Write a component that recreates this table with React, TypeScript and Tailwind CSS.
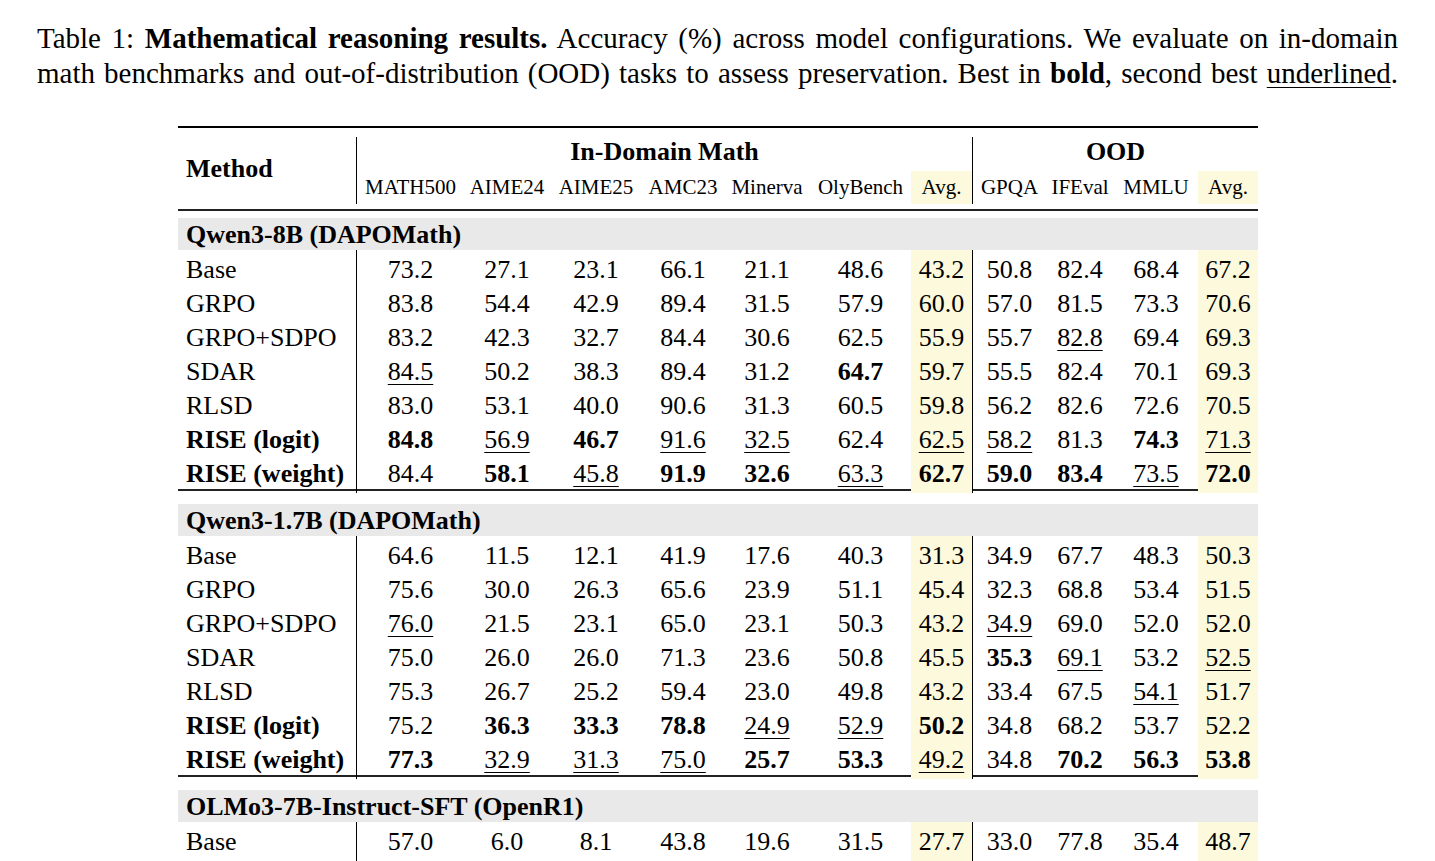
import React from "react";

type Row = { method: string; bold?: boolean; vals: string[] };
type Section = { title: string; rows: Row[] };

// "*" = best (bold), "_" = second best (underlined)
const sections: Section[] = [
  {
    title: "Qwen3-8B (DAPOMath)",
    rows: [
      { method: "Base", vals: ["73.2", "27.1", "23.1", "66.1", "21.1", "48.6", "43.2", "50.8", "82.4", "68.4", "67.2"] },
      { method: "GRPO", vals: ["83.8", "54.4", "42.9", "89.4", "31.5", "57.9", "60.0", "57.0", "81.5", "73.3", "70.6"] },
      { method: "GRPO+SDPO", vals: ["83.2", "42.3", "32.7", "84.4", "30.6", "62.5", "55.9", "55.7", "_82.8", "69.4", "69.3"] },
      { method: "SDAR", vals: ["_84.5", "50.2", "38.3", "89.4", "31.2", "*64.7", "59.7", "55.5", "82.4", "70.1", "69.3"] },
      { method: "RLSD", vals: ["83.0", "53.1", "40.0", "90.6", "31.3", "60.5", "59.8", "56.2", "82.6", "72.6", "70.5"] },
      { method: "RISE (logit)", bold: true, vals: ["*84.8", "_56.9", "*46.7", "_91.6", "_32.5", "62.4", "_62.5", "_58.2", "81.3", "*74.3", "_71.3"] },
      { method: "RISE (weight)", bold: true, vals: ["84.4", "*58.1", "_45.8", "*91.9", "*32.6", "_63.3", "*62.7", "*59.0", "*83.4", "_73.5", "*72.0"] },
    ],
  },
  {
    title: "Qwen3-1.7B (DAPOMath)",
    rows: [
      { method: "Base", vals: ["64.6", "11.5", "12.1", "41.9", "17.6", "40.3", "31.3", "34.9", "67.7", "48.3", "50.3"] },
      { method: "GRPO", vals: ["75.6", "30.0", "26.3", "65.6", "23.9", "51.1", "45.4", "32.3", "68.8", "53.4", "51.5"] },
      { method: "GRPO+SDPO", vals: ["_76.0", "21.5", "23.1", "65.0", "23.1", "50.3", "43.2", "_34.9", "69.0", "52.0", "52.0"] },
      { method: "SDAR", vals: ["75.0", "26.0", "26.0", "71.3", "23.6", "50.8", "45.5", "*35.3", "_69.1", "53.2", "_52.5"] },
      { method: "RLSD", vals: ["75.3", "26.7", "25.2", "59.4", "23.0", "49.8", "43.2", "33.4", "67.5", "_54.1", "51.7"] },
      { method: "RISE (logit)", bold: true, vals: ["75.2", "*36.3", "*33.3", "*78.8", "_24.9", "_52.9", "*50.2", "34.8", "68.2", "53.7", "52.2"] },
      { method: "RISE (weight)", bold: true, vals: ["*77.3", "_32.9", "_31.3", "_75.0", "*25.7", "*53.3", "_49.2", "34.8", "*70.2", "*56.3", "*53.8"] },
    ],
  },
  {
    title: "OLMo3-7B-Instruct-SFT (OpenR1)",
    rows: [
      { method: "Base", vals: ["57.0", "6.0", "8.1", "43.8", "19.6", "31.5", "27.7", "33.0", "77.8", "35.4", "48.7"] },
    ],
  },
];

const cols = ["MATH500", "AIME24", "AIME25", "AMC23", "Minerva", "OlyBench", "Avg.", "GPQA", "IFEval", "MMLU", "Avg."];
const grid = "grid grid-cols-[178px_108px_86px_92px_82px_86px_101px_61px_74px_68px_84px_60px]";
const subGrid = "grid grid-cols-[108px_86px_92px_82px_86px_101px_61px_74px_68px_84px_60px]";

// i = index among the 11 metric columns
function cellClass(i: number) {
  const avg = i === 6 || i === 10;
  const rule = i === 0 || i === 7;
  return `flex items-center justify-center h-full ${avg ? "bg-[#fdf9dc]" : ""} ${rule ? "border-l border-black" : ""}`;
}

function Value({ v }: { v: string }) {
  if (v.startsWith("*")) return <span className="font-bold">{v.slice(1)}</span>;
  if (v.startsWith("_"))
    return <span className="underline decoration-1 underline-offset-[4px]">{v.slice(1)}</span>;
  return <span>{v}</span>;
}

export default function App() {
  return (
    <div className="w-[1435px] h-[861px] overflow-hidden bg-white text-black font-['Liberation_Serif',serif]">
      {/* Caption */}
      <div className="pt-[21px] px-[37px] w-[1435px] text-[29px] leading-[35px]">
        <div className="text-justify [text-align-last:justify] whitespace-nowrap">
          Table 1: <b>Mathematical reasoning results.</b> Accuracy (%) across model configurations. We evaluate on in-domain
        </div>
        <div className="text-justify [text-align-last:justify] whitespace-nowrap">
          math benchmarks and out-of-distribution (OOD) tasks to assess preservation. Best in <b>bold</b>, second best{" "}
          <span className="underline decoration-1 underline-offset-[4px]">underlined</span>.
        </div>
      </div>

      {/* Table */}
      <div className="ml-[178px] mt-[35px] w-[1080px] text-[26px]">
        <div className="h-[2px] bg-black" />
        <div className="pt-[9px] pb-[5px] flex">
          <div className="w-[178px] flex items-center pl-[8px] pb-[4px] font-bold">Method</div>
          <div className="flex flex-col">
            <div className="grid grid-cols-[616px_286px] h-[34px] leading-[29px]">
              <div className="flex items-start justify-center font-bold border-l border-black">In-Domain Math</div>
              <div className="flex items-start justify-center font-bold border-l border-black">OOD</div>
            </div>
            <div className={`${subGrid} h-[33px] text-[21px]`}>
              {cols.map((c, i) => (
                <div key={i} className={cellClass(i)}>
                  {c}
                </div>
              ))}
            </div>
          </div>
        </div>
        <div className="h-[2px] bg-[#222]" />

        {sections.map((s, si) => (
          <div key={si}>
            <div className="pt-[7px]">
              <div className="h-[32px] bg-[#e9e9e9] flex items-center pl-[8px] font-bold">{s.title}</div>
              {s.rows.map((r, ri) => (
                <div key={ri} className={`${grid} h-[34px]`}>
                  <div className={`flex items-center pl-[8px] ${r.bold ? "font-bold" : ""}`}>{r.method}</div>
                  {r.vals.map((v, i) => (
                    <div key={i} className={cellClass(i)}>
                      <Value v={v} />
                    </div>
                  ))}
                </div>
              ))}
            </div>
            {si < sections.length - 1 && (
              <div className="pt-[1px] pb-[6px]">
                <div className="h-[2px] bg-[#222]" />
              </div>
            )}
          </div>
        ))}
      </div>
    </div>
  );
}
